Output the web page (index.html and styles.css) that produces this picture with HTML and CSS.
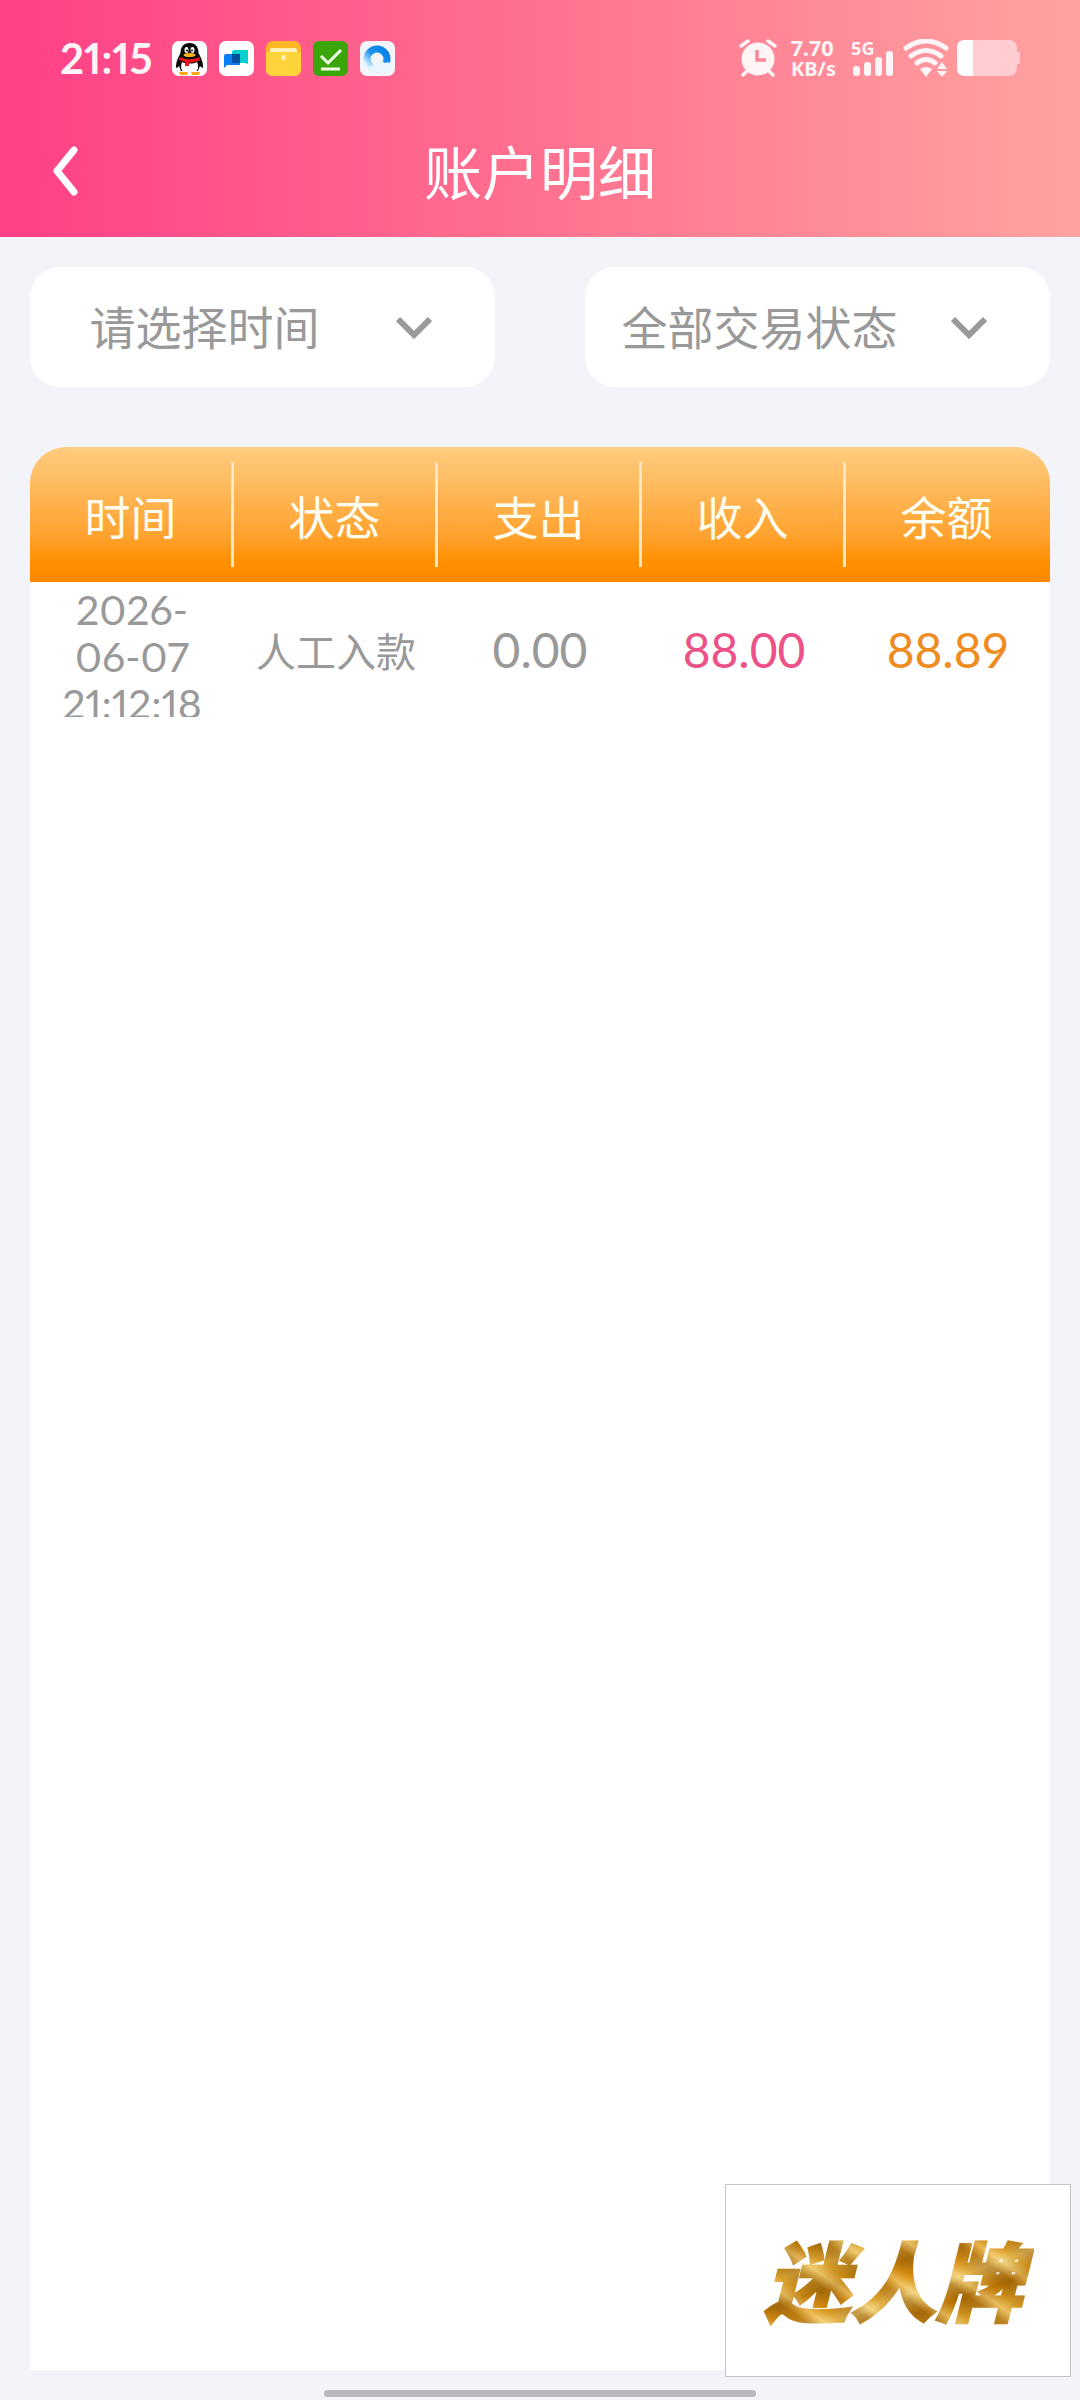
FILE: index.html
```html
<!DOCTYPE html>
<html lang="zh-CN">
<head>
<meta charset="utf-8">
<meta name="viewport" content="width=device-width, initial-scale=1">
<title>账户明细</title>
<link rel="stylesheet" href="styles.css">
</head>
<body class="page">
<header class="header">
  <div class="status">
    <div class="status-left">
      <span class="clock">21:15</span>
      <svg class="app" viewBox="0 0 35 35" aria-hidden="true">
        <rect width="35" height="35" rx="7" fill="#fff"/>
        <path d="M17.500 2C11.500 2 8.500 6 8.500 12c-2 4-4.500 8-4.500 13 0 3 1.500 2 3 0l2 5h17l2-5c2 2 3 3 3 0 0-5-2.500-9-4.500-13 0-6-3-10-9-10z" fill="#0a0a0a"/>
        <path d="M10 21c4 2 11 2 15 0 3 6 0 12-7.500 12S7.500 27 10 21z" fill="#fff"/>
        <path d="M7 31h9l-1 3H8zM19 31h9l-1 3h-7z" fill="#f9a619"/>
        <ellipse cx="14.500" cy="9" rx="2" ry="3" fill="#fff"/><ellipse cx="20.500" cy="9" rx="2" ry="3" fill="#fff"/>
        <circle cx="15" cy="9.500" r="1"/><circle cx="20" cy="9.500" r="1"/>
        <ellipse cx="17.500" cy="14" rx="6" ry="2" fill="#fbb01c"/>
        <path d="M8 16c6 3 13 3 19 0l1 3c-3 2-7 2.500-11 2.500V25h-4v-4l-6-2z" fill="#e8151b"/>
      </svg>
      <svg class="app" viewBox="0 0 35 35" aria-hidden="true">
        <rect width="35" height="35" rx="7" fill="#fff"/>
        <path d="M15 9h14v14l-3-1H13V11q0-2 2-2z" fill="#05d0cf"/>
        <path d="M7 13h14v11H8l-3 3V15q0-2 2-2z" fill="#067df2"/>
        <path d="M13 13h8v9h-8z" fill="#044f9d"/>
      </svg>
      <svg class="app" viewBox="0 0 35 35" aria-hidden="true">
        <rect width="35" height="35" rx="7" fill="#ffb624"/>
        <path d="M0 12h35v16q0 7-7 7H7q-7 0-7-7z" fill="#ffd43a"/>
        <rect x="4" y="7" width="27" height="7" rx="2" fill="#fff0b4"/>
        <path d="M0 11h35v5H0z" fill="#ffd43a"/><circle cx="17.500" cy="16.500" r="2.500" fill="#fff3bd"/>
      </svg>
      <svg class="app" viewBox="0 0 35 35" aria-hidden="true">
        <rect width="35" height="35" rx="6" fill="#3aa60a"/>
        <path d="M8 15l7 7L28 9M8 28h19" fill="none" stroke="#f4fbe8" stroke-width="3"/>
      </svg>
      <svg class="app" viewBox="0 0 35 35" aria-hidden="true">
        <defs><linearGradient id="ring" x1="0" y1="1" x2="1" y2="0"><stop offset=".1" stop-color="#d8f1ff"/><stop offset=".5" stop-color="#1a94ee"/><stop offset="1" stop-color="#0b7fe6"/></linearGradient></defs>
        <rect width="35" height="35" rx="7" fill="#f3f5fb"/>
        <circle cx="17" cy="18" r="10" fill="none" stroke="url(#ring)" stroke-width="7"/>
        <path d="M11 31a5 5 0 0 1 4-8 7 7 0 0 1 10-1 5 5 0 0 1 5 9z" fill="#e9f5ff"/>
      </svg>
    </div>
    <div class="status-right">
      <svg class="alarm" viewBox="0 0 38 38" aria-hidden="true">
        <circle cx="19" cy="20" r="16.500" fill="#fff4f6"/>
        <path d="M2 7l7-5M36 7l-7-5M4 36l5-5M34 36l-5-5" stroke="#fff4f6" stroke-width="3.500" stroke-linecap="round"/>
        <path d="M18 11v10h9" fill="none" stroke="#ff8599" stroke-width="3.500"/>
      </svg>
      <div class="speed"><span>7.70</span><span class="unit">KB/s</span></div>
      <div class="signal">
        <span class="net">5G</span>
        <svg class="bars" viewBox="0 0 44 38" aria-hidden="true"><g fill="#fff4f6"><rect x="2" y="27" width="7" height="10" rx="3"/><rect x="13" y="23" width="7" height="14" rx="3"/><rect x="24" y="18" width="7" height="19" rx="3"/><rect x="35" y="12" width="7" height="25" rx="3"/></g></svg>
      </div>
      <svg class="wifi" viewBox="0 0 46 38" aria-hidden="true">
        <g fill="none" stroke="#fff4f6" stroke-width="5" stroke-linecap="round"><path d="M3 9Q23-5 43 9M8 17Q23 6 38 17M14 24Q23 17 32 24"/></g>
        <path d="M17 30q6-4 12 0l-6 8zM34 30l5-7 5 7zM34 32h10l-5 6z" fill="#fff4f6"/>
      </svg>
      <svg class="battery" viewBox="0 0 63 36" aria-hidden="true">
        <rect width="60" height="36" rx="8" fill="#ffcdd2"/><path d="M60 12h1q2 0 2 2v8q0 2-2 2h-1z" fill="#ffcdd2"/>
        <path d="M16 0H8Q0 0 0 8v20q0 8 8 8h8z" fill="#fff"/>
      </svg>
    </div>
  </div>
  <nav class="nav">
    <button class="back" type="button" aria-label="返回">
      <svg class="back-icon" viewBox="0 0 26 50" aria-hidden="true"><path d="M21 4L4 25l17 21" fill="none" stroke="#fff" stroke-width="7" stroke-linecap="round" stroke-linejoin="round"/></svg>
    </button>
    <h1 class="title">账户明细</h1>
  </nav>
</header>
<main class="main">
  <form class="filters">
    <div class="filter">
      <select class="select" aria-label="时间"><option>请选择时间</option></select>
      <svg class="arrow" viewBox="0 0 36 24" aria-hidden="true"><path d="M2 3l16 16L34 3" fill="none" stroke="#999" stroke-width="6"/></svg>
    </div>
    <div class="filter">
      <select class="select" aria-label="交易状态"><option>全部交易状态</option></select>
      <svg class="arrow" viewBox="0 0 36 24" aria-hidden="true"><path d="M2 3l16 16L34 3" fill="none" stroke="#999" stroke-width="6"/></svg>
    </div>
  </form>
  <section class="card">
    <table class="table">
      <thead><tr><th>时间</th><th>状态</th><th>支出</th><th>收入</th><th>余额</th></tr></thead>
      <tbody>
        <tr>
          <td><div class="time">2026-<br>06-07<br>21:12:18</div></td>
          <td class="kind">人工入款</td>
          <td>0.00</td>
          <td class="income">88.00</td>
          <td class="balance">88.89</td>
        </tr>
      </tbody>
    </table>
  </section>
</main>
<aside class="badge"><span class="badge-text">迷人牌</span></aside>
<div class="home-bar"></div>
</body>
</html>
```

FILE: styles.css
```css
* { box-sizing: border-box; }

.page {
  margin: 0;
  min-height: 100vh;
  display: flex;
  flex-direction: column;
  background: #f3f4fa;
  color: #999;
  font-family: Lato, "Noto Sans CJK SC", sans-serif;
  font-variant-numeric: proportional-nums;
}

.header {
  background: linear-gradient(90deg, #ff3f86, #ff718f 50%, #ffa3a1);
  color: #fff4f6;
}

.status {
  display: flex;
  justify-content: space-between;
  align-items: center;
  height: 116px;
  padding: 0 60px;
}
.status-left { display: flex; align-items: center; gap: 12px; }
.status-right { display: flex; align-items: center; }
.clock { width: 100px; font-size: 42px; line-height: 50px; font-weight: 700; }
.app { width: 35px; height: 35px; }
.alarm { width: 38px; height: 38px; margin-right: 14px; }
.speed {
  display: flex;
  flex-direction: column;
  width: 44px;
  font-family: "Noto Sans", sans-serif;
  font-size: 22px;
  line-height: 22px;
  font-weight: 700;
  margin-right: 16px;
}
.unit { font-size: 20px; }
.signal { position: relative; width: 44px; height: 38px; margin-right: 8px; }
.net {
  position: absolute;
  left: 0;
  top: 0;
  font-family: "Noto Sans", sans-serif;
  font-size: 18px;
  line-height: 18px;
  font-weight: 700;
}
.bars { display: block; width: 44px; height: 38px; }
.wifi { width: 46px; height: 38px; margin-right: 8px; }
.battery { width: 63px; height: 36px; }

.nav {
  position: relative;
  display: flex;
  justify-content: center;
  height: 121px;
}
.back {
  position: absolute;
  left: 30px;
  top: 0;
  width: 72px;
  height: 110px;
  padding: 0;
  border: 0;
  background: none;
}
.back-icon { display: block; width: 26px; height: 50px; margin: 0 auto; }
.title {
  margin: 0;
  color: #fff;
  font-size: 58px;
  line-height: 114px;
  font-weight: 400;
}

.main {
  flex: 1;
  display: flex;
  flex-direction: column;
  gap: 60px;
  padding: 30px;
}
.filters { display: flex; gap: 90px; }
.filter { position: relative; flex: 1; height: 120px; }
.select {
  appearance: none;
  width: 100%;
  height: 100%;
  padding: 0 116px 0 0;
  border: 0;
  border-radius: 30px;
  background: #fff;
  color: #999;
  font-family: inherit;
  font-size: 46px;
  text-align: center;
  text-align-last: center;
}
.arrow {
  position: absolute;
  right: 63px;
  top: 49px;
  width: 36px;
  height: 24px;
  pointer-events: none;
}

.card {
  flex: 1;
  overflow: hidden;
  border-radius: 36px 36px 0 0;
  background: #fff;
}
.table { width: 100%; table-layout: fixed; border-collapse: collapse; }
.table thead { background: linear-gradient(#ffcc80, #ffa22f 66%, #ff9000 85%, #ff8800); }
.table th {
  height: 135px;
  padding: 0 3px 0 0;
  color: #fffdf0;
  font-size: 46px;
  font-weight: 400;
}
.table th:not(:last-child) {
  background: linear-gradient(#ffe6c8, #ffe6c8) right center / 3px 105px no-repeat;
}
.table td {
  height: 135px;
  padding: 0;
  text-align: center;
  font-size: 48px;
  font-variant-numeric: tabular-nums;
}
.table .time {
  height: 135px;
  padding-top: 4px;
  overflow: hidden;
  font-size: 41px;
  line-height: 47px;
  font-variant-numeric: proportional-nums;
}
.table .kind { font-size: 40px; }
.table .income { color: #ec5288; }
.table .balance { color: #ee8c22; }

.badge {
  position: fixed;
  right: 9px;
  bottom: 23px;
  display: flex;
  justify-content: center;
  align-items: center;
  width: 346px;
  height: 193px;
  padding: 0 10px 6px 0;
  border: 1px solid #c4c5ca;
  background: #fff;
}
.badge-text {
  padding: 0 12px;
  font-size: 86px;
  line-height: 120px;
  font-weight: 900;
  font-style: italic;
  font-family: "Noto Sans CJK SC", sans-serif;
  color: transparent;
  -webkit-text-stroke: 2px transparent;
  background:
    repeating-linear-gradient(35deg, #8a520066 0 6px, #ffe9a066 16px, #c8800066 27px, #8a520066 38px),
    linear-gradient(160deg, #b0720c 20%, #e8bc50 32%, #b97a10 44%, #e29a20 52%, #f0cf78 60%, #b87408 70%, #dba53a 80%);
  background-clip: text;
  -webkit-background-clip: text;
}

.home-bar {
  position: fixed;
  left: 30%;
  right: 30%;
  bottom: 3px;
  height: 7px;
  border-radius: 4px;
  background: #b7b9be;
}
```
